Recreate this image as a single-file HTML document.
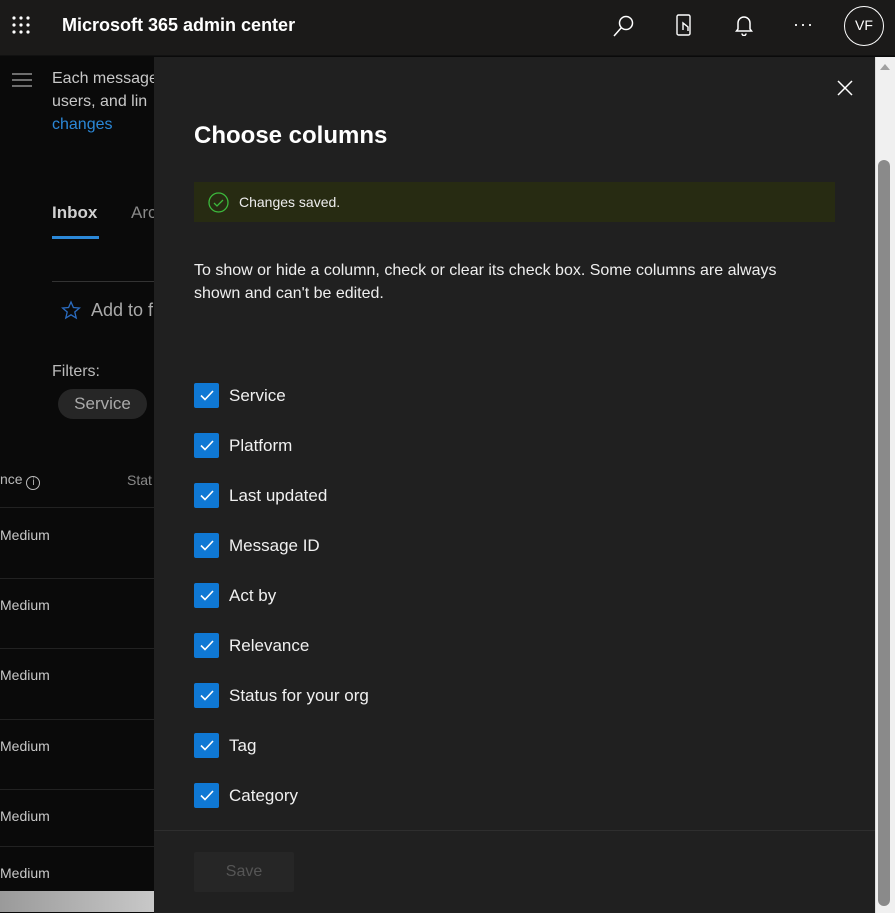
<!DOCTYPE html>
<html><head><meta charset="utf-8"><style>
*{margin:0;padding:0;box-sizing:border-box}
body{width:895px;height:913px;overflow:hidden;background:#0a0a0a;font-family:"Liberation Sans",sans-serif;position:relative;color:#fff}
.a{position:absolute}
.hdr{left:0;top:0;width:895px;height:56px;background:#1b1a19;border-bottom:1px solid #111}
.panel{left:154px;top:57px;width:721px;height:856px;background:#202020}
.sb{left:875px;top:57px;width:20px;height:856px;background:#f0f0f0;border-left:1px solid #ddd}
.cb{width:25px;height:25px;background:#0f78d4;border-radius:2px}
.lbl{font-size:17px;color:#f0f0f0}
.med{font-size:14px;color:#c8c8c8;left:0}
.rl{left:0;width:154px;height:1px;background:#222}
</style></head><body>
<div class="a hdr"></div>
<svg class="a" style="left:11px;top:15px" width="22" height="22"><g fill="#fff"><circle cx="3" cy="3" r="1.6"/><circle cx="10" cy="3" r="1.6"/><circle cx="17" cy="3" r="1.6"/><circle cx="3" cy="10" r="1.6"/><circle cx="10" cy="10" r="1.6"/><circle cx="17" cy="10" r="1.6"/><circle cx="3" cy="17" r="1.6"/><circle cx="10" cy="17" r="1.6"/><circle cx="17" cy="17" r="1.6"/></g></svg>
<div class="a" style="left:62px;top:15px;font-size:18px;font-weight:bold;color:#fff">Microsoft 365 admin center</div>
<svg class="a" style="left:612px;top:14px" width="24" height="24" fill="none" stroke="#fff" stroke-width="1.5"><circle cx="14" cy="9" r="6.5"/><path d="M9.5 13.5L2 22"/></svg>
<svg class="a" style="left:674px;top:13px" width="22" height="24" fill="none" stroke="#fff" stroke-width="1.4"><rect x="3" y="2" width="13" height="20" rx="1.5"/><path d="M9 17v-7l5 4v4"/></svg>
<svg class="a" style="left:734px;top:14px" width="20" height="22" fill="none" stroke="#fff" stroke-width="1.5"><path d="M4 15V9a6 6 0 0112 0v6l1.5 2h-15z"/><path d="M8 19.5a2 2 0 004 0"/></svg>
<div class="a" style="left:793px;top:14px;font-size:18px;color:#fff;letter-spacing:1px">···</div>
<div class="a" style="left:844px;top:6px;width:40px;height:40px;border:1.5px solid #fff;border-radius:50%;font-size:14px;text-align:center;line-height:37px">VF</div>

<svg class="a" style="left:12px;top:73px" width="20" height="14" stroke="#aaa" stroke-width="1.3"><path d="M0 1h20M0 7h20M0 13h20"/></svg>
<div class="a" style="left:52px;top:67px;font-size:16px;line-height:23px;color:#c8c8c8">Each message<br>users, and lin<br><span style="color:#2b88d8">changes</span></div>
<div class="a" style="left:52px;top:203px;font-size:17px;font-weight:bold;color:#d0d0d0">Inbox</div>
<div class="a" style="left:131px;top:203px;font-size:17px;color:#888">Arc</div>
<div class="a" style="left:52px;top:236px;width:47px;height:3px;background:#2b88d8"></div>
<div class="a" style="left:52px;top:281px;width:102px;height:1px;background:#333"></div>
<svg class="a" style="left:61px;top:300px" width="22" height="22" fill="none" stroke="#2b6cc0" stroke-width="1.3"><path d="M10 2l2.4 5.5 6 .5-4.6 4 1.4 6-5.2-3.2-5.2 3.2 1.4-6L1.6 8l6-.5z"/></svg>
<div class="a" style="left:91px;top:300px;font-size:18px;color:#aaa">Add to f</div>
<div class="a" style="left:52px;top:363px;font-size:16px;color:#bbb">Filters:</div>
<div class="a" style="left:58px;top:389px;width:89px;height:30px;background:#262626;border-radius:15px;font-size:17px;color:#aaa;text-align:center;line-height:30px">Service</div>
<div class="a" style="left:0;top:471px;font-size:14px;color:#bbb">nce <span style="display:inline-block;width:14px;height:14px;border:1.3px solid #bbb;border-radius:50%;font-size:10px;text-align:center;line-height:12px;vertical-align:-1px">i</span></div>
<div class="a" style="left:127px;top:472px;font-size:14px;color:#888">Stat</div>
<div class="a rl" style="top:507px"></div><div class="a rl" style="top:578px"></div><div class="a rl" style="top:648px"></div><div class="a rl" style="top:719px"></div><div class="a rl" style="top:789px"></div><div class="a rl" style="top:846px"></div>
<div class="a med" style="top:527px">Medium</div><div class="a med" style="top:597px">Medium</div><div class="a med" style="top:667px">Medium</div><div class="a med" style="top:738px">Medium</div><div class="a med" style="top:808px">Medium</div><div class="a med" style="top:865px">Medium</div>
<div class="a" style="left:0;top:891px;width:154px;height:21px;background:linear-gradient(90deg,#9a9a9a,#c8c8c8)"></div>

<div class="a panel"></div>
<svg class="a" style="left:837px;top:80px" width="16" height="16" stroke="#fff" stroke-width="1.5"><path d="M1 1l14 14M15 1L1 15"/></svg>
<div class="a" style="left:194px;top:122px;font-size:24px;font-weight:bold">Choose columns</div>
<div class="a" style="left:194px;top:182px;width:641px;height:40px;background:#272b12"></div>
<svg class="a" style="left:208px;top:192px" width="21" height="21" fill="none" stroke="#3cb83c" stroke-width="1.3"><circle cx="10.5" cy="10.5" r="9.5"/><path d="M6 11l3 3 6-6"/></svg>
<div class="a" style="left:239px;top:194px;font-size:14px;color:#eee">Changes saved.</div>
<div class="a" style="left:194px;top:259px;width:630px;font-size:16px;line-height:23px;color:#eee">To show or hide a column, check or clear its check box. Some columns are always shown and can't be edited.</div>
<div class="a" style="left:154px;top:830px;width:721px;height:1px;background:#2e2e2e"></div>
<div class="a" style="left:194px;top:852px;width:100px;height:40px;background:#262626;border-radius:2px;font-size:16px;color:#555;text-align:center;line-height:40px">Save</div>
<div class="a sb"></div>
<div class="a" style="left:880px;top:64px;width:0;height:0;border-left:5px solid transparent;border-right:5px solid transparent;border-bottom:6px solid #a0a0a0"></div>
<div class="a" style="left:878px;top:160px;width:12px;height:746px;background:#8a8a8a;border-radius:6px"></div>

<div class="a" style="left:194px;top:383px;width:300px">
<div style="position:relative;height:50px"><div class="a cb"></div><svg class="a" style="left:6px;top:7px" width="14" height="11" fill="none" stroke="#fff" stroke-width="1.6"><path d="M1 5.5l4 4L13 1"/></svg><div class="a lbl" style="left:35px;top:3px">Service</div></div>
<div style="position:relative;height:50px"><div class="a cb"></div><svg class="a" style="left:6px;top:7px" width="14" height="11" fill="none" stroke="#fff" stroke-width="1.6"><path d="M1 5.5l4 4L13 1"/></svg><div class="a lbl" style="left:35px;top:3px">Platform</div></div>
<div style="position:relative;height:50px"><div class="a cb"></div><svg class="a" style="left:6px;top:7px" width="14" height="11" fill="none" stroke="#fff" stroke-width="1.6"><path d="M1 5.5l4 4L13 1"/></svg><div class="a lbl" style="left:35px;top:3px">Last updated</div></div>
<div style="position:relative;height:50px"><div class="a cb"></div><svg class="a" style="left:6px;top:7px" width="14" height="11" fill="none" stroke="#fff" stroke-width="1.6"><path d="M1 5.5l4 4L13 1"/></svg><div class="a lbl" style="left:35px;top:3px">Message ID</div></div>
<div style="position:relative;height:50px"><div class="a cb"></div><svg class="a" style="left:6px;top:7px" width="14" height="11" fill="none" stroke="#fff" stroke-width="1.6"><path d="M1 5.5l4 4L13 1"/></svg><div class="a lbl" style="left:35px;top:3px">Act by</div></div>
<div style="position:relative;height:50px"><div class="a cb"></div><svg class="a" style="left:6px;top:7px" width="14" height="11" fill="none" stroke="#fff" stroke-width="1.6"><path d="M1 5.5l4 4L13 1"/></svg><div class="a lbl" style="left:35px;top:3px">Relevance</div></div>
<div style="position:relative;height:50px"><div class="a cb"></div><svg class="a" style="left:6px;top:7px" width="14" height="11" fill="none" stroke="#fff" stroke-width="1.6"><path d="M1 5.5l4 4L13 1"/></svg><div class="a lbl" style="left:35px;top:3px">Status for your org</div></div>
<div style="position:relative;height:50px"><div class="a cb"></div><svg class="a" style="left:6px;top:7px" width="14" height="11" fill="none" stroke="#fff" stroke-width="1.6"><path d="M1 5.5l4 4L13 1"/></svg><div class="a lbl" style="left:35px;top:3px">Tag</div></div>
<div style="position:relative;height:50px"><div class="a cb"></div><svg class="a" style="left:6px;top:7px" width="14" height="11" fill="none" stroke="#fff" stroke-width="1.6"><path d="M1 5.5l4 4L13 1"/></svg><div class="a lbl" style="left:35px;top:3px">Category</div></div>
</div>
</body></html>
